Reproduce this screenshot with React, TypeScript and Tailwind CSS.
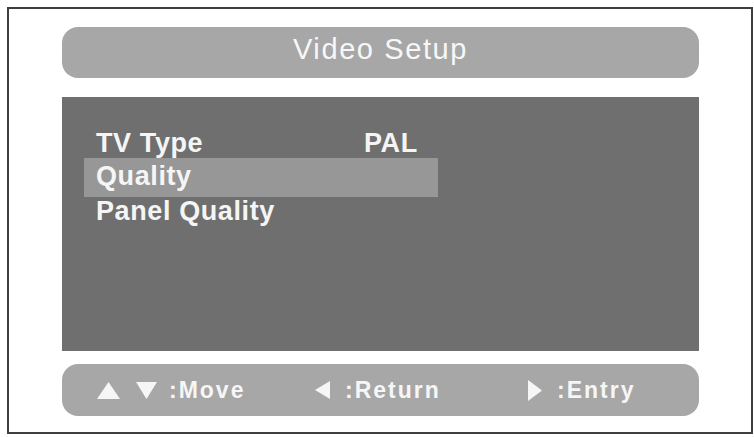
import React from "react";

const font = { fontFamily: '"Liberation Sans", Arial, sans-serif' };

function Tri({ dir, w, h }: { dir: "up" | "down" | "left" | "right"; w: number; h: number }) {
  const pts =
    dir === "up"
      ? `0,${h} ${w / 2},0 ${w},${h}`
      : dir === "down"
      ? `0,0 ${w},0 ${w / 2},${h}`
      : dir === "left"
      ? `${w},0 ${w},${h} 0,${h / 2}`
      : `0,0 0,${h} ${w},${h / 2}`;
  return (
    <svg width={w} height={h} viewBox={`0 0 ${w} ${h}`} className="shrink-0 block">
      <polygon points={pts} fill="#f6f6f6" />
    </svg>
  );
}

export default function App() {
  return (
    <div className="w-[754px] h-[437px] bg-white overflow-hidden pt-[7px] pl-[7px]" style={font}>
      <div className="w-[746px] h-[427px] border-2 border-[#3e3e3e] pt-[18px] pl-[53px]">
        {/* Title bar */}
        <div className="w-[637px] h-[51px] rounded-[16px] bg-[#a7a7a7] text-center text-[29px] leading-[44px] tracking-[1.6px] text-[#f7f7f7]">
          Video Setup
        </div>

        {/* Main panel */}
        <div className="mt-[19px] w-[637px] h-[254px] bg-[#6f6f6f] pt-[30px] pl-[22px] text-[27px] font-bold tracking-[0.6px] text-[#f5f5f5]">
          <div className="w-[354px] h-[31px] leading-[33px] pl-[12px] flex">
            <span className="w-[268px]">TV Type</span>
            <span>PAL</span>
          </div>
          <div className="w-[354px] h-[39px] leading-[36px] pl-[12px] bg-[#979797]">Quality</div>
          <div className="w-[354px] h-[30px] leading-[28px] pl-[12px]">Panel Quality</div>
        </div>

        {/* Bottom bar */}
        <div className="mt-[13px] w-[637px] h-[52px] rounded-[16px] bg-[#a7a7a7] flex items-center pl-[35px] text-[23px] font-bold leading-[50px] tracking-[2px] text-[#f6f6f6]">
          <div className="w-[218px] flex items-center">
            <Tri dir="up" w={23} h={17} />
            <div className="w-[16px]" />
            <Tri dir="down" w={21} h={17} />
            <div className="w-[12px]" />
            <span>:Move</span>
          </div>
          <div className="w-[213px] flex items-center">
            <Tri dir="left" w={15} h={18} />
            <div className="w-[15px]" />
            <span>:Return</span>
          </div>
          <div className="flex items-center">
            <Tri dir="right" w={14} h={21} />
            <div className="w-[15px]" />
            <span>:Entry</span>
          </div>
        </div>
      </div>
    </div>
  );
}
